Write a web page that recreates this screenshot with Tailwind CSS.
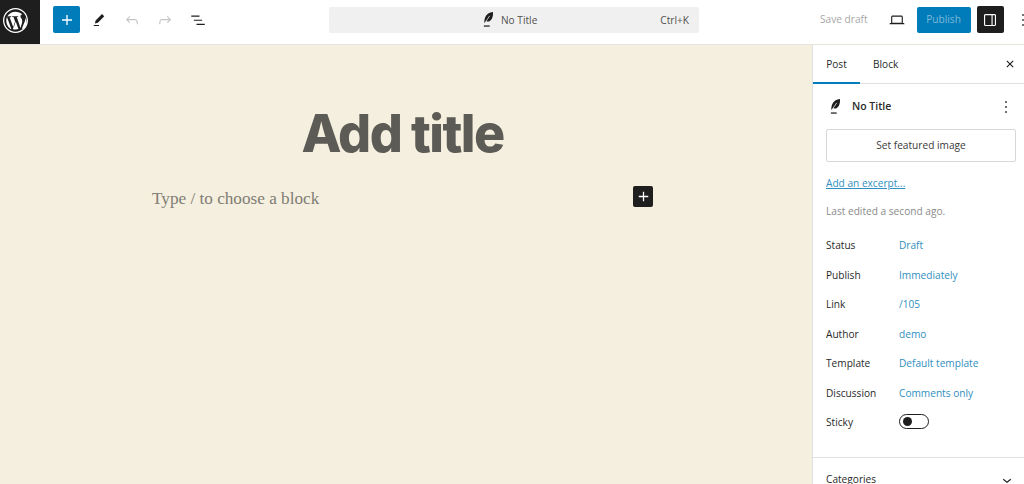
<!DOCTYPE html>
<html lang="en">
<head>
  <meta charset="UTF-8" />
  <meta name="viewport" content="width=device-width, initial-scale=1.0" />
  <title>Add title</title>
  <script src="https://cdn.jsdelivr.net/npm/@tailwindcss/browser@4"></script>
</head>
<body class="bg-white text-[#2a2a2a] font-['Open_Sans',sans-serif] text-[10.15px] overflow-hidden">
  <div class="w-[1024px] h-[484px] flex flex-col overflow-hidden">

    <!-- top bar -->
    <header class="h-[45px] shrink-0 flex items-start border-b border-[#e6e4dc] bg-white">
      <div class="w-[329px] h-[44px] flex items-start shrink-0">
        <a class="w-10 h-[44px] pl-[3px] pb-[4px] bg-[#1e1e1e] flex items-center">
          <svg width="25" height="25" viewBox="0 0 20 20" fill="#fff" fill-rule="evenodd"><path d="M20 10c0-5.52-4.48-10-10-10S0 4.48 0 10s4.48 10 10 10 10-4.48 10-10zM10 1.01c4.96 0 8.99 4.03 8.99 8.99s-4.03 8.99-8.99 8.99S1.01 14.96 1.01 10 5.04 1.01 10 1.01zM8.44 15.94l-3.15-8.5c.5-.03 1.08-.08 1.08-.08.46-.06.41-.73-.05-.71 0 0-1.41.11-2.32.11h-.55C4.8 4.47 7.2 3.07 10 3.07c2.08 0 3.97.8 5.4 2.09h-.11c-.78 0-1.34.69-1.34 1.43 0 .66.38 1.22.79 1.88.31.54.66 1.23.66 2.23 0 .69-.27 1.5-.62 2.61l-.81 2.71-2.94-8.74c.49-.03.94-.08.94-.08.44-.05.38-.71-.06-.69 0 0-1.32.1-2.17.1-.8 0-2.14-.1-2.14-.1-.44-.02-.5.66-.06.69 0 0 .42.05.86.08l1.27 3.48-1.79 5.36zM15.28 16.07l2.13-5.3c.4-1 .53-1.81.53-2.53 0-.26-.02-.5-.05-.72.55 1 .86 2.15.86 3.38 0 2.61-1.42 4.89-3.47 6.17zM3.17 7.26l3.57 9.77C4.3 15.85 2.62 13.12 2.62 10c0-1.03.18-2.05.55-2.74zM10.17 10.76l2.18 5.96c.02.04.04.07.06.1-.74.26-1.53.4-2.36.4-.7 0-1.37-.1-2.01-.29z"/></svg>
        </a>
        <button class="ml-[13px] mt-[6px] w-[27px] h-[27px] rounded-[2px] bg-[#007cba] flex items-center justify-center">
          <svg width="20" height="20" viewBox="0 0 24 24" fill="#fff"><path d="M18 11.2h-5.2V6h-1.6v5.2H6v1.6h5.2V18h1.6v-5.2H18z"/></svg>
        </button>
        <div class="ml-[10px] mt-[6px] h-[27px] flex items-center gap-[15px]">
          <svg width="18" height="18" viewBox="0 0 24 24" fill="#1e1e1e"><path d="m19 7-3-3-8.5 8.5-1 4 4-1L19 7Zm-7 11.5H5V20h7v-1.5Z"/></svg>
          <svg width="18" height="18" viewBox="0 0 24 24" fill="#c4c4c4"><path d="M18.3 11.7c-.6-.6-1.4-.9-2.3-.9H6.7l2.9-3.3-1.1-1-4.5 5L8.5 16l1-1-2.7-2.7H16c.5 0 .9.2 1.3.5 1 1 1 3.4 1 4.5v.3h1.5v-.2c0-1.5 0-4.3-1.5-5.7z"/></svg>
          <svg width="18" height="18" viewBox="0 0 24 24" fill="#c4c4c4"><path d="M15.6 6.5l-1.1 1 2.9 3.3H8c-.9 0-1.7.3-2.3.9-1.4 1.5-1.4 4.2-1.4 5.6v.2h1.5v-.3c0-1.1 0-3.5 1-4.5.3-.3.7-.5 1.3-.5h9.2L14.5 15l1.1 1.1 4.6-4.6-4.6-5z"/></svg>
          <svg width="18" height="18" viewBox="0 0 24 24" fill="#1e1e1e"><path d="M3 6h11v1.5H3V6Zm3.5 5.5h11V13h-11v-1.5ZM21 17H10v1.5h11V17Z"/></svg>
        </div>
      </div>

      <div class="mt-[7px] w-[370px] h-[26px] shrink-0 rounded-[2px] bg-[#f0f0f0] flex items-center pr-[10px] pl-[149px] text-[#50504e]">
        <svg width="20" height="20" viewBox="0 0 24 24" fill="#1e1e1e"><path d="M18 2.500c-4 .3-8 2.400-9.500 6.500-.7 1.900-1 3.800-1 6l.5.3 2-2c1.200.8 2.500.8 3.800.2 3-1.400 4.500-5.700 4.200-11z"/><path d="M9 14.500 14 7" stroke="#f0f0f0" stroke-width=".9"/><path d="M7 18.500h7V20H7z"/></svg>
        <span class="ml-[3px] pt-[1px]">No Title</span>
        <span class="ml-auto pt-[1px]">Ctrl+K</span>
      </div>

      <div class="mt-[6px] h-[27px] flex-1 flex items-center min-w-0 pl-[121px]">
        <span class="text-[#a7a7a7] whitespace-nowrap pt-[1px]">Save draft</span>
        <svg class="ml-[20px] shrink-0" width="18" height="18" viewBox="0 0 24 24" fill="#1e1e1e"><path d="M20.5 16h-.7V8c0-1.1-.9-2-2-2H6.2c-1.1 0-2 .9-2 2v8h-.7c-.8 0-1.5.7-1.5 1.5h20c0-.8-.7-1.5-1.5-1.5zM5.7 8c0-.3.2-.5.5-.5h11.6c.3 0 .5.2.5.5v7.6H5.7V8z"/></svg>
        <button class="ml-[11px] w-[54px] h-[26px] pt-[1px] shrink-0 rounded-[2px] bg-[#007cba] text-[#7fb9d8]">Publish</button>
        <button class="ml-[6px] w-[27px] h-[27px] shrink-0 rounded-[2px] bg-[#1e1e1e] flex items-center justify-center">
          <svg width="18" height="18" viewBox="0 0 24 24" fill="#fff"><path d="M18 4H6c-1.1 0-2 .9-2 2v12c0 1.1.9 2 2 2h12c1.1 0 2-.9 2-2V6c0-1.1-.9-2-2-2zm-4 14.5H6c-.3 0-.5-.2-.5-.5V6c0-.3.2-.5.5-.5h8v13zm4.5-.5c0 .3-.2.5-.5.5h-2.500v-13H18c.3 0 .5.2.5.5v12z"/></svg>
        </button>
        <svg class="ml-[9px] shrink-0" width="20" height="20" viewBox="0 0 24 24" fill="#1e1e1e"><path d="M13 19h-2v-2h2v2zm0-6h-2v-2h2v2zm0-6h-2V5h2v2z"/></svg>
      </div>
    </header>

    <div class="flex-1 flex min-h-0">
      <!-- editor canvas -->
      <main class="w-[812px] shrink-0 bg-[#f5efdf] flex flex-col items-center pt-[54px] pr-[7px]">
        <h1 class="font-['Inter',sans-serif] font-extrabold text-[52px] leading-[70px] tracking-[-1.6px] text-[#5c5b55]">Add title</h1>
        <div class="w-[501px] mt-[17px] flex items-start justify-between">
          <p class="font-['Liberation_Serif',serif] text-[17.2px] leading-[26px] text-[#7f7d74]">Type / to choose a block</p>
          <button class="w-5 h-[21px] rounded-[2px] bg-[#1e1e1e] flex items-center justify-center">
            <svg width="19" height="19" viewBox="0 0 24 24" fill="#fff"><path d="M18 11.2h-5.2V6h-1.6v5.2H6v1.6h5.2V18h1.6v-5.2H18z"/></svg>
          </button>
        </div>
      </main>

      <!-- settings sidebar -->
      <aside class="flex-1 min-w-0 border-l border-[#e0e0e0] bg-white">
        <div class="h-[39px] flex items-stretch border-b border-[#e0e0e0]">
          <div class="w-[47px] pt-[2px] flex items-center justify-center border-b-2 border-[#007cba] -mb-px font-medium">Post</div>
          <div class="ml-[13px] pt-[2px] flex items-center font-medium">Block</div>
          <svg class="ml-auto mr-[5px] self-center" width="18" height="18" viewBox="0 0 24 24" fill="#1e1e1e"><path d="M12 13.06l3.712 3.713 1.061-1.06L13.061 12l3.712-3.712-1.06-1.06L12 10.938 8.288 7.227l-1.061 1.06L10.939 12l-3.712 3.712 1.06 1.061L12 13.061z"/></svg>
        </div>

        <div class="pl-[13px] pr-[8px] border-b border-[#e0e0e0] h-[374px]">
          <div class="h-[45px] flex items-center">
            <svg class="-ml-[1px]" width="20" height="20" viewBox="0 0 24 24" fill="#1e1e1e"><path d="M18 2.500c-4 .3-8 2.400-9.500 6.500-.7 1.900-1 3.800-1 6l.5.3 2-2c1.200.8 2.500.8 3.800.2 3-1.400 4.500-5.700 4.200-11z"/><path d="M9 14.500 14 7" stroke="#fff" stroke-width=".9"/><path d="M7 18.500h7V20H7z"/></svg>
            <span class="ml-[7px] text-[10.5px] font-semibold">No Title</span>
            <svg class="ml-auto" width="20" height="20" viewBox="0 0 24 24" fill="#1e1e1e"><path d="M13 19h-2v-2h2v2zm0-6h-2v-2h2v2zm0-6h-2V5h2v2z"/></svg>
          </div>
          <button class="w-[190px] h-[33px] border border-[#d8d8d8] rounded-[2px] text-[#3a3a3a]">Set featured image</button>
          <a class="block mt-[14px] leading-[14px] text-[#2f8fc0] underline">Add an excerpt...</a>
          <p class="mt-[14px] leading-[14px] text-[#8a8a8a]">Last edited a second ago.</p>
          <dl class="mt-[13px] grid grid-cols-[73px_1fr] auto-rows-[29.5px] items-center">
            <dt>Status</dt><dd class="text-[#2f8fc0]">Draft</dd>
            <dt>Publish</dt><dd class="text-[#2f8fc0]">Immediately</dd>
            <dt>Link</dt><dd class="text-[#2f8fc0]">/105</dd>
            <dt>Author</dt><dd class="text-[#2f8fc0]">demo</dd>
            <dt>Template</dt><dd class="text-[#2f8fc0]">Default template</dd>
            <dt>Discussion</dt><dd class="text-[#2f8fc0]">Comments only</dd>
            <dt>Sticky</dt>
            <dd>
              <span class="-mt-[3px] w-[30px] h-[15px] rounded-full border border-[#1e1e1e] flex items-center pl-[3px]"><span class="w-[9px] h-[9px] rounded-full bg-[#1e1e1e]"></span></span>
            </dd>
          </dl>
        </div>

        <div class="pl-[13px] pr-[8px] h-[44px] flex items-center font-medium">
          <span>Categories</span>
          <svg class="ml-auto" width="18" height="18" viewBox="0 0 24 24" fill="#1e1e1e"><path d="M17.5 11.6L12 16l-5.5-4.4.9-1.2L12 14l4.5-3.6 1 1.2z"/></svg>
        </div>
      </aside>
    </div>
  </div>
</body>
</html>
